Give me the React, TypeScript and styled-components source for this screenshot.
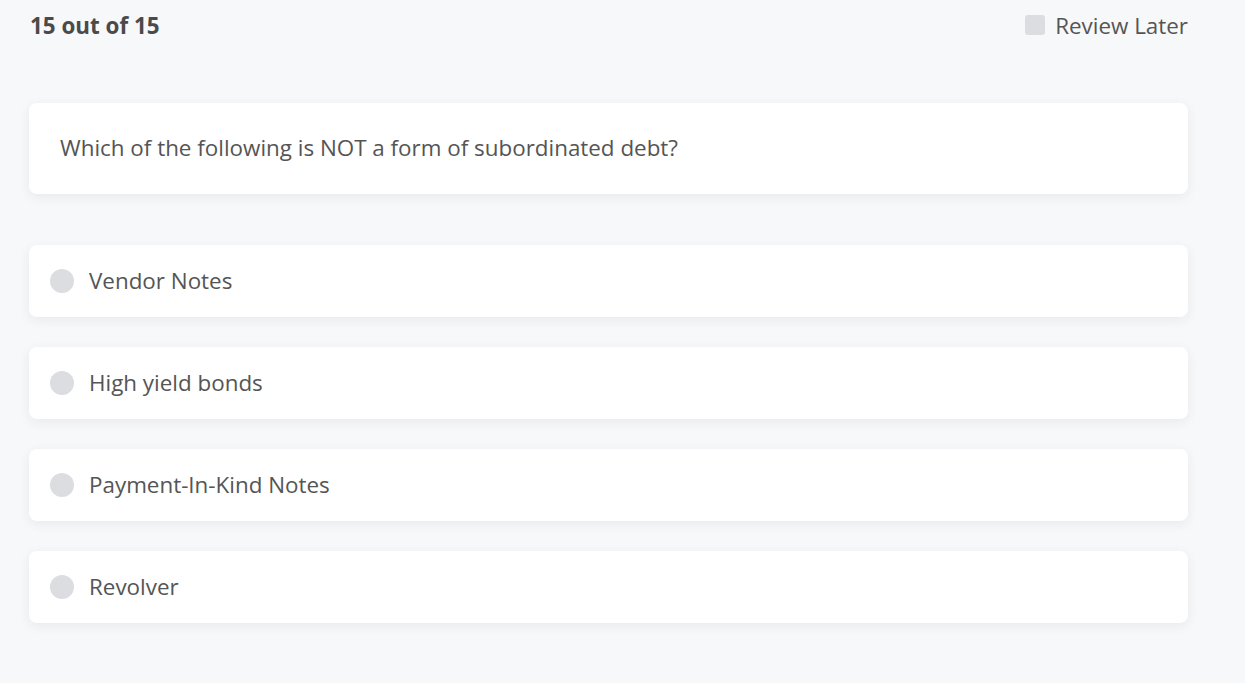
import styled, { createGlobalStyle } from "styled-components";

const options = ["Vendor Notes", "High yield bonds", "Payment-In-Kind Notes", "Revolver"];

const GlobalStyle = createGlobalStyle`
    html, body {
        margin: 0;
        background: #f7f8fa;
        font-family: "Open Sans", "Noto Sans", sans-serif;
        color: #505050;
    }
`;

const Page = styled.main`
    width: 1159px;
    padding: 10px 0 40px 29px;
`;

const Header = styled.header`
    display: flex;
    justify-content: space-between;
    align-items: center;
    height: 30px;
`;

const Counter = styled.h1`
    margin: 0 0 0 1px;
    font-size: 22.4px;
    font-weight: 700;
    color: #4a4a4a;
`;

const Review = styled.label`
    display: flex;
    align-items: center;
    gap: 10px;
    font-size: 22.4px;
    color: #555;
`;

const Box = styled.span`
    width: 20px;
    height: 20px;
    border-radius: 3px;
    background: #dcdde0;
`;

const Card = styled.div<{ $question?: boolean }>`
    display: flex;
    align-items: center;
    box-sizing: border-box;
    background: #fff;
    border-radius: 8px;
    box-shadow: 0 3px 12px rgba(30, 40, 60, 0.07);
    height: ${({ $question }) => ($question ? "91px" : "72px")};
    padding: 0 0 2px ${({ $question }) => ($question ? "31px" : "21px")};
    font-size: 22.4px;
    color: #555;
`;

const QuestionCard = styled(Card)`
    margin: 63px 0 51px;
`;

const List = styled.div`
    display: flex;
    flex-direction: column;
    gap: 30px;
`;

const Radio = styled.span`
    width: 24px;
    height: 24px;
    border-radius: 50%;
    background: #dcdde0;
    margin: 2px 15px 0 0;
`;

export default function App() {
    return (
        <>
            <GlobalStyle />
            <Page>
                <Header>
                    <Counter>15 out of 15</Counter>
                    <Review>
                        <Box />
                        Review Later
                    </Review>
                </Header>
                <QuestionCard $question>Which of the following is NOT a form of subordinated debt?</QuestionCard>
                <List>
                    {options.map((o) => (
                        <Card key={o}>
                            <Radio />
                            {o}
                        </Card>
                    ))}
                </List>
            </Page>
        </>
    );
}
